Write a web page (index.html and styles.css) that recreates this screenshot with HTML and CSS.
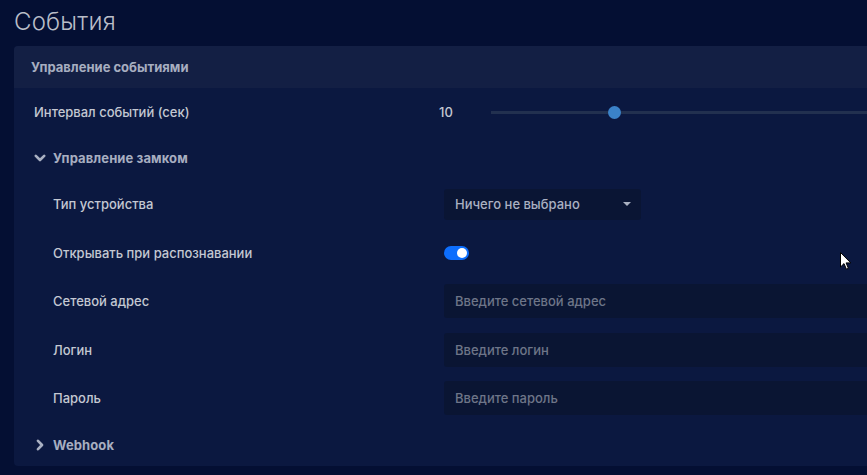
FILE: index.html
```html
<!DOCTYPE html>
<html lang="ru">
<head>
<meta charset="utf-8">
<link rel="stylesheet" href="styles.css">
</head>
<body>
<div class="page">
  <h1 class="title">События</h1>
  <section class="card">
    <div class="card-head">Управление событиями</div>
    <div class="card-body">
      <div class="row">
        <div class="label">Интервал событий (сек)</div>
        <div class="control slider-ctl">
          <span class="value">10</span>
          <div class="track"><span class="thumb"></span></div>
        </div>
      </div>
      <div class="group-title">
        <svg class="chev" width="12" height="12" viewBox="0 0 12 12"><path d="M1.8 3.8 L6 8 L10.2 3.8" fill="none" stroke="#a9b0c2" stroke-width="2.6" stroke-linecap="round" stroke-linejoin="round"/></svg>
        <span>Управление замком</span>
      </div>
      <div class="row sub">
        <div class="label">Тип устройства</div>
        <div class="control">
          <div class="select">
            <span>Ничего не выбрано</span>
            <span class="caret"></span>
          </div>
        </div>
      </div>
      <div class="row sub">
        <div class="label">Открывать при распознавании</div>
        <div class="control">
          <div class="toggle"><span class="knob"></span></div>
        </div>
      </div>
      <div class="row sub">
        <div class="label">Сетевой адрес</div>
        <div class="control"><div class="input">Введите сетевой адрес</div></div>
      </div>
      <div class="row sub">
        <div class="label">Логин</div>
        <div class="control"><div class="input">Введите логин</div></div>
      </div>
      <div class="row sub">
        <div class="label">Пароль</div>
        <div class="control"><div class="input">Введите пароль</div></div>
      </div>
      <div class="group-title last">
        <svg class="chev" width="12" height="12" viewBox="0 0 12 12"><path d="M4 1.8 L8 6 L4 10.2" fill="none" stroke="#a9b0c2" stroke-width="2.6" stroke-linecap="round" stroke-linejoin="round"/></svg>
        <span>Webhook</span>
      </div>
    </div>
  </section>
</div>
<svg class="cursor" width="12" height="19" viewBox="0 0 12 19"><path d="M0.5 0.5 L0.5 15 L4 11.6 L6.4 17.2 L8.4 16.3 L6.1 10.9 L10.8 10.9 Z" fill="#ffffff" stroke="#000000" stroke-width="1"/></svg>
</body>
</html>
```
FILE: styles.css
```css
html, body {
  margin: 0;
  padding: 0;
}
body {
  background: #040f33;
  width: 867px;
  height: 475px;
  overflow: hidden;
  position: relative;
  font-family: Inter, "Noto Sans", sans-serif;
}
.page {
  width: 1000px;
  padding: 0 0 0 14px;
}
.title {
  margin: 0;
  height: 46px;
  line-height: 44px;
  font-size: 24px;
  font-weight: 300;
  color: #b9bdc8;
  letter-spacing: 0.2px;
}
.card {
  background: #0b1840;
  border-radius: 4px 0 0 4px;
}
.card-head {
  background: #131f44;
  height: 42px;
  line-height: 42px;
  padding-left: 17px;
  font-size: 13px;
  font-weight: 700;
  color: #a7aec0;
  border-radius: 4px 0 0 0;
}
.card-body {
  padding: 0 0 0 20px;
}
.row {
  display: flex;
  align-items: center;
  height: 48px;
}
.row.sub {
  height: 48.5px;
}
.row.sub .label {
  padding-left: 19px;
  width: 391px;
}
.label {
  width: 410px;
  font-size: 13px;
  font-weight: 500;
  color: #c4c8d2;
  flex: none;
}
.control {
  flex: 1;
  display: flex;
  align-items: center;
}
.slider-ctl .value {
  width: 52px;
  margin-left: -5px;
  font-size: 13px;
  font-weight: 500;
  color: #c4c8d2;
}
.track {
  flex: 1;
  height: 3px;
  background: #22304f;
  position: relative;
}
.thumb {
  position: absolute;
  left: 117px;
  top: -5px;
  width: 13px;
  height: 13px;
  border-radius: 50%;
  background: #3b82c8;
}
.group-title {
  display: flex;
  align-items: center;
  height: 44px;
  font-size: 13px;
  font-weight: 700;
  color: #a7aec0;
  letter-spacing: 0.1px;
}
.group-title.last {
  height: 42px;
  margin-top: 1px;
}
.chev {
  width: 12px;
  margin-right: 7px;
  flex: none;
}
.select {
  width: 197px;
  height: 31px;
  background: #0a1534;
  border-radius: 3px;
  display: flex;
  align-items: center;
  justify-content: space-between;
  padding: 0 10px 0 11px;
  box-sizing: border-box;
  font-size: 13px;
  font-weight: 500;
  color: #aab1c2;
}
.caret {
  width: 0;
  height: 0;
  border-left: 4px solid transparent;
  border-right: 4px solid transparent;
  border-top: 4px solid #aab1c2;
}
.toggle {
  width: 25px;
  height: 14px;
  border-radius: 7px;
  background: #0d6efd;
  position: relative;
}
.knob {
  position: absolute;
  right: 2px;
  top: 2px;
  width: 10px;
  height: 10px;
  border-radius: 50%;
  background: #ffffff;
}
.input {
  flex: 1;
  height: 34px;
  line-height: 34px;
  background: #0a1533;
  border-radius: 3px 0 0 3px;
  padding-left: 11px;
  font-size: 13px;
  font-weight: 500;
  color: #6e7588;
}
.cursor {
  position: absolute;
  left: 840px;
  top: 252px;
}
```
